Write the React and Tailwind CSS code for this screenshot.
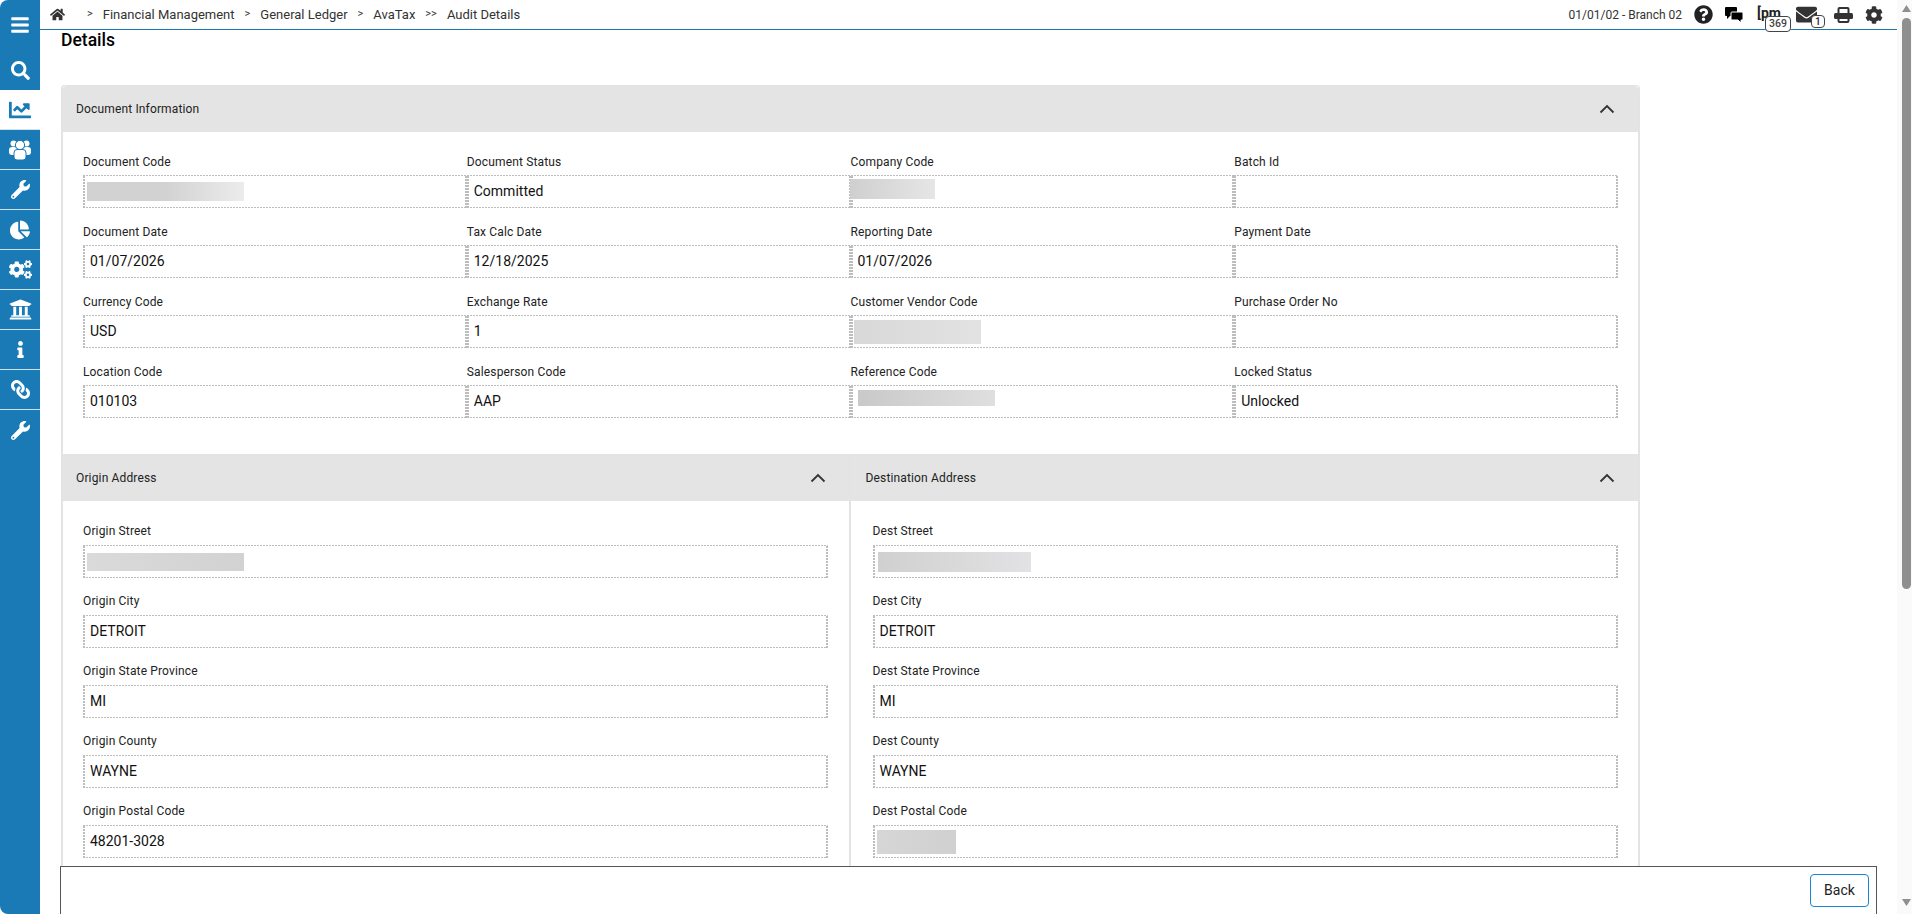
import React from 'react';
import {
  FaBars,
  FaChartLine,
  FaChartPie,
  FaCog,
  FaCogs,
  FaEnvelope,
  FaHome,
  FaInfo,
  FaLink,
  FaQuestionCircle,
  FaSearch,
  FaUniversity,
  FaWrench,
} from 'react-icons/fa';

const UsersIcon = ({ size }) => (
  <svg width={size} height={(size * 20) / 22} viewBox="0 0 22 20" fill="currentColor">
    <circle cx="4.5" cy="3.5" r="3" />
    <circle cx="17.5" cy="3.5" r="3" />
    <rect x="0" y="7" width="8" height="8" rx="3" />
    <rect x="14" y="7" width="8" height="8" rx="3" />
    <circle cx="11" cy="5" r="4.6" stroke="#197ab6" />
    <path d="M5 13 Q5 9.5 8 9.5 H14 Q17 9.5 17 13 V17 Q17 20 14 20 H8 Q5 20 5 17 Z" stroke="#197ab6" />
  </svg>
);

const CommentsIcon = () => (
  <svg width="18" height="16" viewBox="0 0 18 16" className="mr-[14px] text-black">
    <path d="M1 0 H11 Q12 0 12 1 V8 Q12 9 11 9 H5 L2 12 V9 H1 Q0 9 0 8 V1 Q0 0 1 0 Z" fill="currentColor" />
    <path d="M7 5 H17 Q18 5 18 6 V12 Q18 13 17 13 H16 V16 L13 13 H7 Q6 13 6 12 V6 Q6 5 7 5 Z" fill="currentColor" stroke="#fff" />
  </svg>
);

const PrintIcon = () => (
  <svg width="19" height="16" viewBox="0 0 19 16" fill="none" className="mr-[12px] text-[#333]">
    <path d="M4.5 7 V2 Q4.5 1 5.5 1 H13.5 Q14.5 1 14.5 2 V7" stroke="currentColor" strokeWidth="2" />
    <rect x="0" y="6" width="19" height="6" rx="1.5" fill="currentColor" />
    <path d="M4.5 11 V14 Q4.5 15 5.5 15 H13.5 Q14.5 15 14.5 14 V11" stroke="currentColor" strokeWidth="2" />
  </svg>
);

const navItems = [
  { icon: FaChartLine, active: true, size: 22 },
  { icon: UsersIcon, size: 22 },
  { icon: FaWrench, size: 19 },
  { icon: FaChartPie, size: 20 },
  { icon: FaCogs, size: 23 },
  { icon: FaUniversity, size: 23 },
  { icon: FaInfo, size: 17 },
  { icon: FaLink, size: 19, flip: true },
  { icon: FaWrench, size: 19 },
];

const docFields = [
  { label: 'Document Code', blur: 'w-[157px] h-[19px] from-[#d2d2d2] via-[#d2d2d2] to-[#ececec]' },
  { label: 'Document Status', value: 'Committed' },
  { label: 'Company Code', blur: 'w-[85px] h-[20px] self-start mt-[4px] -ml-[5px] from-[#cfcfcf] to-[#e6e6e6]' },
  { label: 'Batch Id' },
  { label: 'Document Date', value: '01/07/2026' },
  { label: 'Tax Calc Date', value: '12/18/2025' },
  { label: 'Reporting Date', value: '01/07/2026' },
  { label: 'Payment Date' },
  { label: 'Currency Code', value: 'USD' },
  { label: 'Exchange Rate', value: '1' },
  { label: 'Customer Vendor Code', blur: 'w-[127px] h-[24px] -ml-[1px] from-[#d8d8d8] to-[#e2e2e2]' },
  { label: 'Purchase Order No' },
  { label: 'Location Code', value: '010103' },
  { label: 'Salesperson Code', value: 'AAP' },
  { label: 'Reference Code', blur: 'w-[137px] h-[16px] self-start mt-[5px] ml-[3px] from-[#c9c9c9] to-[#dfdfdf]' },
  { label: 'Locked Status', value: 'Unlocked' },
];

const originFields = [
  { label: 'Origin Street', blur: 'w-[157px] h-[18px] from-[#dadada] to-[#d2d2d2]' },
  { label: 'Origin City', value: 'DETROIT' },
  { label: 'Origin State Province', value: 'MI' },
  { label: 'Origin County', value: 'WAYNE' },
  { label: 'Origin Postal Code', value: '48201-3028' },
];

const destFields = [
  { label: 'Dest Street', blur: 'w-[153px] h-[20px] ml-[1px] from-[#d0d0d0] to-[#e2e2e4]' },
  { label: 'Dest City', value: 'DETROIT' },
  { label: 'Dest State Province', value: 'MI' },
  { label: 'Dest County', value: 'WAYNE' },
  { label: 'Dest Postal Code', blur: 'w-[79px] h-[24px] from-[#d6d6d6] to-[#d0d0d0]' },
];

const Chevron = () => (
  <svg width="16" height="10" viewBox="0 0 16 10" fill="none" className="text-[#333]">
    <path d="M1.5 8.5 L8 2 L14.5 8.5" stroke="currentColor" strokeWidth="1.8" />
  </svg>
);

// 1px dots across, 2px wide down the sides: a plain 1px dotted border comes out too fine
const dottedBox =
  '[background:repeating-linear-gradient(90deg,#bdbdbd_0_2px,transparent_2px_3px)_top/100%_1px_no-repeat,repeating-linear-gradient(90deg,#bdbdbd_0_2px,transparent_2px_3px)_bottom/100%_1px_no-repeat,repeating-linear-gradient(0deg,#bdbdbd_0_2px,transparent_2px_3px)_left/2px_100%_no-repeat,repeating-linear-gradient(0deg,#bdbdbd_0_2px,transparent_2px_3px)_right/2px_100%_no-repeat]';

const Field = ({ label, value, blur, roomy }) => (
  <div className={roomy ? 'mb-[12px]' : 'mb-[13px]'}>
    <div className="h-[20px] pt-px text-[12px] leading-[20px] font-[450] tracking-[0.15px] text-[#222]">{label}</div>
    <div className={`flex h-[33px] items-center pl-[4px] text-[14px] text-[#111] ${roomy ? 'mt-[5px]' : 'mt-[4px]'} ${dottedBox}`}>
      {blur && <div className={`bg-gradient-to-r ${blur}`} />}
      {value && <span className="ml-[3px]">{value}</span>}
    </div>
  </div>
);

const PanelHeader = ({ title, className = '' }) => (
  <div className={`flex h-[46px] items-center justify-between bg-[#e4e4e4] pr-[23px] ${className}`}>
    <span className="text-[12px] font-[450] tracking-[0.15px] text-[#222]">{title}</span>
    <Chevron />
  </div>
);

const App = () => {
  return (
    <div className="flex h-[914px] w-[1912px] overflow-hidden bg-white font-['Roboto',sans-serif]">
      <aside className="flex w-[40px] shrink-0 flex-col overflow-hidden rounded-l-[8px] bg-[#197ab6] text-white">
        <div className="flex h-[90px] flex-col items-center">
          <div className="flex h-[50px] items-center justify-center">
            <FaBars size={20} />
          </div>
          <div className="flex h-[40px] items-center justify-center">
            <FaSearch size={19} />
          </div>
        </div>
        {navItems.map(({ icon: Icon, active, size, flip }, i) => (
          <div
            key={i}
            className={`flex h-[40px] items-center justify-center border-b border-[#cfe2ef] last:border-b-0 ${
              active ? 'bg-white text-[#197ab6]' : ''
            }`}>
            <span className={flip ? '-scale-x-100' : ''}>
              <Icon size={size} />
            </span>
          </div>
        ))}
      </aside>

      <div className="relative flex min-w-0 flex-1 flex-col">
        <header className="flex h-[30px] shrink-0 items-center justify-between border-b border-[#1f7ab3] pl-[10px] pr-[14px] text-[13px] text-[#333]">
          <div className="flex items-center">
            <FaHome size={15} className="text-[#333]" />
            <div className="ml-[22px] flex items-center gap-[10px]">
              <span className="text-[11px]">&gt;</span>
              <span>Financial Management</span>
              <span className="text-[11px]">&gt;</span>
              <span>General Ledger</span>
              <span className="text-[11px]">&gt;</span>
              <span>AvaTax</span>
              <span className="text-[11px]">&gt;&gt;</span>
              <span>Audit Details</span>
            </div>
          </div>
          <div className="flex items-center">
            <span className="mr-[12px] text-[12px]">01/01/02 - Branch 02</span>
            <FaQuestionCircle size={19} className="mr-[12px] text-[#222]" />
            <CommentsIcon />
            <div className="relative mr-[19px] h-[24px] w-[20px]">
              <span className="absolute left-0 top-[2px] text-[14px] font-bold leading-[16px] text-[#222]">[pm</span>
              <span className="absolute left-[8px] top-[13px] rounded-[4px] border border-[#444] bg-white px-[3px] text-[10.5px] leading-[14px] font-medium text-[#444]">369</span>
            </div>
            <div className="relative mr-[17px] h-[24px] w-[21px]">
              <FaEnvelope size={21} className="absolute left-0 top-[1px] text-[#333]" />
              <span className="absolute left-[15px] top-[12px] rounded-[4px] border border-[#444] bg-white px-[3px] text-[10px] leading-[11px] font-semibold text-[#333]">1</span>
            </div>
            <PrintIcon />
            <FaCog size={18} className="text-[#333]" />
          </div>
        </header>

        <main className="min-h-0 flex-1 overflow-hidden pl-[21px]">
          <h1 className="h-[21px] text-[17.5px] leading-[21px] font-medium text-black">Details</h1>
          <div className="mt-[34px] w-[1579px] rounded-t-[4px] border-x-2 border-t border-[#e3e3e3]">
            <PanelHeader title="Document Information" className="rounded-t-[4px] pl-[13px]" />
            <div className="grid grid-cols-4 pb-[23px] pl-[20px] pr-[20px] pt-[19px]">
              {docFields.map((f) => (
                <Field key={f.label} {...f} />
              ))}
            </div>
            <div className="grid grid-cols-2 border-t border-[#e3e3e3]">
              <div className="border-r-2 border-[#e3e3e3]">
                <PanelHeader title="Origin Address" className="pl-[13px]" />
                <div className="pl-[20px] pr-[21px] pt-[19px]">
                  {originFields.map((f) => (
                    <Field key={f.label} {...f} roomy />
                  ))}
                </div>
              </div>
              <div>
                <PanelHeader title="Destination Address" className="pl-[15px]" />
                <div className="pl-[22px] pr-[20px] pt-[19px]">
                  {destFields.map((f) => (
                    <Field key={f.label} {...f} roomy />
                  ))}
                </div>
              </div>
            </div>
          </div>
        </main>

        <footer className="absolute bottom-0 left-[20px] right-[20px] flex h-[48px] items-start justify-end border-x border-t border-[#555] bg-white pr-[7px] pt-[7px]">
          <button
            type="button"
            className="h-[33px] w-[59px] rounded-[4px] border border-[#1a85d0] text-[14px] text-[#222]">
            Back
          </button>
        </footer>
      </div>

      <div className="flex w-[15px] shrink-0 flex-col items-center bg-[#fafafa] pl-[3px]">
        <svg width="9" height="7" viewBox="0 0 9 7" className="mt-[5px] text-[#8f8f8f]">
          <path d="M4.5 0 L9 7 L0 7 Z" fill="currentColor" />
        </svg>
        <div className="mt-[6px] h-[571px] w-[9px] rounded-full bg-[#8f8f8f]" />
        <div className="flex-1" />
        <svg width="9" height="7" viewBox="0 0 9 7" className="mb-[8px] text-[#8f8f8f]">
          <path d="M4.5 7 L9 0 L0 0 Z" fill="currentColor" />
        </svg>
      </div>
    </div>
  );
};

export default App;
